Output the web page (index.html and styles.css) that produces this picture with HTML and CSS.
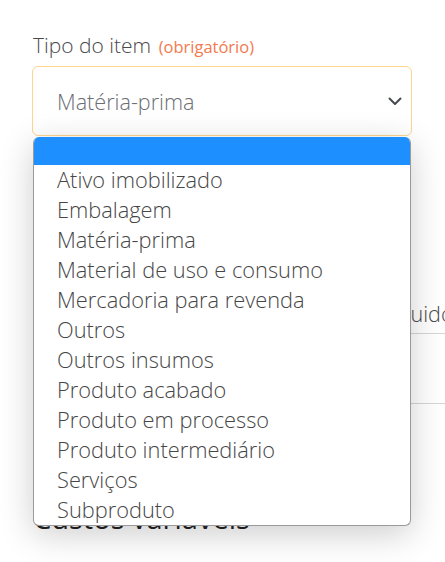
FILE: index.html
```html
<!DOCTYPE html>
<html lang="pt">
<head>
<meta charset="utf-8">
<link rel="stylesheet" href="styles.css">
</head>
<body>
<div class="page">
  <div class="field">
    <label class="label">Tipo do item <span class="req">(obrigatório)</span></label>
    <div class="select">
      <span class="value">Matéria-prima</span>
      <svg class="chev" width="14" height="9" viewBox="0 0 14 9"><path d="M1.5 1.5 L7 7 L12.5 1.5" fill="none" stroke="#474a4f" stroke-width="2" stroke-linecap="round" stroke-linejoin="round"/></svg>
    </div>
    <ul class="menu">
      <li class="opt active">&nbsp;</li>
      <li class="opt">Ativo imobilizado</li>
      <li class="opt">Embalagem</li>
      <li class="opt">Matéria-prima</li>
      <li class="opt">Material de uso e consumo</li>
      <li class="opt">Mercadoria para revenda</li>
      <li class="opt">Outros</li>
      <li class="opt">Outros insumos</li>
      <li class="opt">Produto acabado</li>
      <li class="opt">Produto em processo</li>
      <li class="opt">Produto intermediário</li>
      <li class="opt">Serviços</li>
      <li class="opt">Subproduto</li>
    </ul>
  </div>
  <div class="row">
    <div class="col col1"></div>
    <div class="col col2">
      <div class="label2">Peso líquido</div>
      <div class="input"></div>
    </div>
  </div>
  <h2 class="heading">Custos variáveis</h2>
</div>
</body>
</html>
```
FILE: styles.css
```css
* { box-sizing: border-box; }
html, body { margin: 0; padding: 0; background: #fff; }
body { font-family: "Open Sans", "Noto Sans", sans-serif; font-weight: 300; color: #444; width: 445px; height: 562px; overflow: hidden; }
.page { padding: 29px 0 0 32px; }
.field { position: relative; width: 380px; }
.label { display: block; font-size: 21px; line-height: 32px; height: 32px; color: #4a4a4a; margin-left: 1px; }
.req { font-size: 16.5px; line-height: 1; color: #f27a4e; font-weight: 400; margin-left: 2px; }
.select { margin-top: 5px; height: 70px; border: 1px solid #fdd58c; border-radius: 6px; display: flex; align-items: center; justify-content: space-between; padding: 0 9px 0 24px; }
.value { font-size: 21.6px; color: #6b6e73; }
.chev { margin-top: 1px; }
.menu { position: absolute; left: 1px; top: 108px; width: 378px; margin: 0; padding: 0; list-style: none; background: #fff; border: 1px solid #9a9a9a; border-top: none; border-radius: 6px; box-shadow: 0 8px 34px rgba(0,0,0,0.2); overflow: hidden; z-index: 2; }
.opt { height: 30px; line-height: 30px; font-size: 21.8px; padding-left: 23px; color: #464646; white-space: nowrap; }
.opt.active { background: #1e8fff; height: 28px; }
.row { display: flex; margin-top: 163px; gap: 30px; }
.col1 { width: 273px; flex: none; }
.col2 { width: 350px; flex: none; }
.label2 { font-size: 21.6px; line-height: 30px; color: #4a4a4a; }
.input { margin-top: 4px; height: 71px; border-top: 1px solid #d6d6d6; border-bottom: 1px solid #d6d6d6; }
.heading { margin: 96px 0 0 1px; font-size: 29px; font-weight: 400; color: #222; line-height: 36px; }
```
